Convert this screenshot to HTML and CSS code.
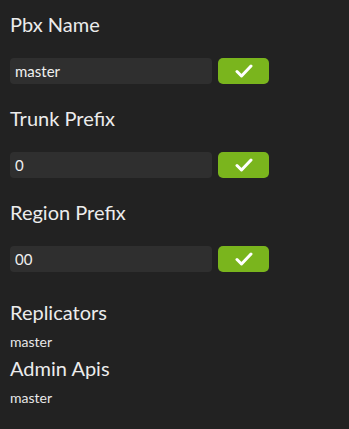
FILE: index.html
```html
<!DOCTYPE html>
<html lang="en">
<head>
    <meta charset="UTF-8">
    <meta name="viewport" content="width=device-width, initial-scale=1.0">
    <title>Pbx Settings</title>
    <link rel="stylesheet" href="styles.css">
</head>
<body>
    <div class="settings">
        <div class="field">
            <div class="field-label">Pbx Name</div>
            <div class="field-row">
                <input class="field-input" type="text" value="master">
                <button class="save-btn"><svg width="18" height="14" viewBox="0 0 18 14"><polyline points="2,7.5 6.5,12 16,2" fill="none" stroke="#fff" stroke-width="3" stroke-linecap="round" stroke-linejoin="round"/></svg></button>
            </div>
        </div>
        <div class="field">
            <div class="field-label">Trunk Prefix</div>
            <div class="field-row">
                <input class="field-input" type="text" value="0">
                <button class="save-btn"><svg width="18" height="14" viewBox="0 0 18 14"><polyline points="2,7.5 6.5,12 16,2" fill="none" stroke="#fff" stroke-width="3" stroke-linecap="round" stroke-linejoin="round"/></svg></button>
            </div>
        </div>
        <div class="field">
            <div class="field-label">Region Prefix</div>
            <div class="field-row">
                <input class="field-input" type="text" value="00">
                <button class="save-btn"><svg width="18" height="14" viewBox="0 0 18 14"><polyline points="2,7.5 6.5,12 16,2" fill="none" stroke="#fff" stroke-width="3" stroke-linecap="round" stroke-linejoin="round"/></svg></button>
            </div>
        </div>

        <div class="info-list">
            <div class="info">
                <div class="field-label">Replicators</div>
                <div class="info-value">master</div>
            </div>
            <div class="info">
                <div class="field-label">Admin Apis</div>
                <div class="info-value">master</div>
            </div>
        </div>
    </div>
</body>
</html>
```

FILE: styles.css
```css
body {
    margin: 0;
    background-color: #222222;
    color: #e8e8e8;
    font-family: Lato, "Liberation Sans", sans-serif;
}

.settings {
    padding: 12px 10px 0 10px;
}

.field {
    margin-bottom: 22px;
}

.field-label {
    font-size: 20px;
    line-height: 24px;
    color: #ececec;
}

.field-row {
    display: flex;
    gap: 6px;
    margin-top: 22px;
}

.field-input {
    width: 202px;
    height: 26px;
    box-sizing: border-box;
    padding: 0 5px;
    border: none;
    border-radius: 4px;
    background-color: #2f2f2f;
    color: #f0f0f0;
    font-family: Lato, "Liberation Sans", sans-serif;
    font-size: 15px;
    outline: none;
}

.save-btn {
    width: 51px;
    height: 26px;
    padding: 0;
    border: none;
    border-radius: 5px;
    background-color: #7ab51d;
    display: flex;
    align-items: center;
    justify-content: center;
    cursor: pointer;
}

.info-list {
    padding-top: 6px;
}

.info {
    margin-bottom: 6px;
}

.info-value {
    font-size: 14px;
    line-height: 16px;
    margin-top: 10px;
}
```
